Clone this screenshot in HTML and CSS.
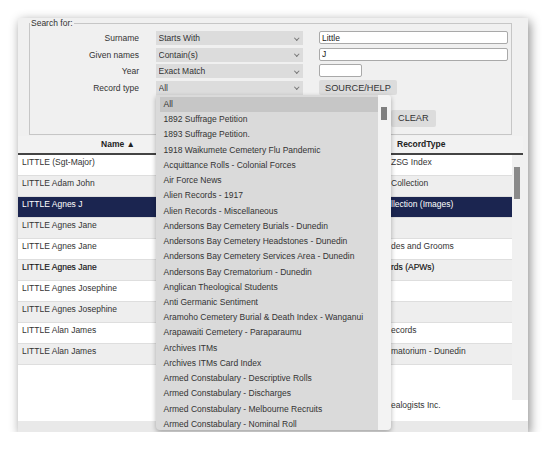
FILE: index.html
```html
<!DOCTYPE html>
<html lang="en">
<head>
    <meta charset="UTF-8">
    <meta name="viewport" content="width=device-width, initial-scale=1.0">
    <title>Search Records</title>
    <link rel="stylesheet" href="styles.css">
</head>
<body>

    <div class="window">
        <fieldset class="search-box">
            <legend>Search for:</legend>
            <div class="search-grid">
                <label for="surname">Surname</label>
                <div class="select-wrap">
                    <select id="surnameMode">
                        <option>Starts With</option>
                        <option>Contain(s)</option>
                        <option>Exact Match</option>
                    </select>
                </div>
                <input type="text" id="surname" class="text-input" value="Little">

                <label for="givenNames">Given names</label>
                <div class="select-wrap">
                    <select id="givenMode">
                        <option>Contain(s)</option>
                        <option>Starts With</option>
                        <option>Exact Match</option>
                    </select>
                </div>
                <input type="text" id="givenNames" class="text-input" value="J">

                <label for="year">Year</label>
                <div class="select-wrap">
                    <select id="yearMode">
                        <option>Exact Match</option>
                        <option>Before</option>
                        <option>After</option>
                    </select>
                </div>
                <input type="text" id="year" class="text-input year-input">

                <label for="recordType">Record type</label>
                <div class="select-wrap">
                    <select id="recordType">
                        <option>All</option>
                    </select>

                    <!-- open list of the record type select -->
                    <div class="dropdown">
                        <ul class="dropdown-list">
                            <li class="active">All</li>
                            <li>1892 Suffrage Petition</li>
                            <li>1893 Suffrage Petition.</li>
                            <li>1918 Waikumete Cemetery Flu Pandemic</li>
                            <li>Acquittance Rolls - Colonial Forces</li>
                            <li>Air Force News</li>
                            <li>Alien Records - 1917</li>
                            <li>Alien Records - Miscellaneous</li>
                            <li>Andersons Bay Cemetery Burials - Dunedin</li>
                            <li>Andersons Bay Cemetery Headstones - Dunedin</li>
                            <li>Andersons Bay Cemetery Services Area - Dunedin</li>
                            <li>Andersons Bay Crematorium - Dunedin</li>
                            <li>Anglican Theological Students</li>
                            <li>Anti Germanic Sentiment</li>
                            <li>Aramoho Cemetery Burial &amp; Death Index - Wanganui</li>
                            <li>Arapawaiti Cemetery - Paraparaumu</li>
                            <li>Archives ITMs</li>
                            <li>Archives ITMs Card Index</li>
                            <li>Armed Constabulary - Descriptive Rolls</li>
                            <li>Armed Constabulary - Discharges</li>
                            <li>Armed Constabulary - Melbourne Recruits</li>
                            <li>Armed Constabulary - Nominal Roll</li>
                        </ul>
                        <div class="dropdown-scroll"><div class="thumb"></div></div>
                    </div>
                </div>
                <button class="btn help-btn">SOURCE/HELP</button>

                <div class="actions">
                    <button class="btn">CLEAR</button>
                </div>
            </div>
        </fieldset>

        <div class="results">
            <div class="results-head">
                <div>Name &#9650;</div>
                <div></div>
                <div>RecordType</div>
                <div></div>
            </div>
            <div class="results-body">
                <div class="rows">
                    <div class="row"><div>LITTLE (Sgt-Major)</div><div></div><div class="cut">ZSG Index</div></div>
                    <div class="row"><div>LITTLE Adam John</div><div></div><div class="cut">Collection</div></div>
                    <div class="row selected"><div>LITTLE Agnes J</div><div></div><div class="cut">llection (Images)</div></div>
                    <div class="row"><div>LITTLE Agnes Jane</div><div></div><div></div></div>
                    <div class="row"><div>LITTLE Agnes Jane</div><div></div><div class="cut">des and Grooms</div></div>
                    <div class="row hover"><div>LITTLE Agnes Jane</div><div></div><div class="cut">rds (APWs)</div></div>
                    <div class="row"><div>LITTLE Agnes Josephine</div><div></div><div></div></div>
                    <div class="row"><div>LITTLE Agnes Josephine</div><div></div><div></div></div>
                    <div class="row"><div>LITTLE Alan James</div><div></div><div class="cut">ecords</div></div>
                    <div class="row"><div>LITTLE Alan James</div><div></div><div class="cut">matorium - Dunedin</div></div>
                </div>
                <div class="vscroll"><div class="thumb"></div></div>
            </div>
        </div>

        <div class="footer">ealogists Inc.</div>
        <div class="hscroll"></div>
    </div>

</body>
</html>
```

FILE: styles.css
```css
body {
    margin: 0;
    background: #fff;
    font-family: 'Liberation Sans', Arial, sans-serif;
    font-size: 8.5px;
    color: #333;
}
.window {
    display: flex;
    flex-direction: column;
    width: 510px;
    height: 414px;
    margin: 18px 0 0 18px;
    background: #f0f0f0;
    box-shadow: 2px 3px 10px rgba(0, 0, 0, 0.45);
    overflow: hidden;
}

/* Search form */
.search-box {
    margin: 0 16px 0 11px;
    padding: 3px 2px 7px 0;
    border: 1px solid #c6c6c6;
    min-width: 0;
}
.search-box legend {
    margin-left: 0;
    padding: 0 1px;
    line-height: 10px;
}
.search-grid {
    display: grid;
    grid-template-columns: 109px 147px 189px;
    grid-template-rows: repeat(4, 14px) auto;
    column-gap: 16.5px;
    row-gap: 2.67px;
    align-items: center;
}
.search-grid label {
    text-align: right;
}
.select-wrap {
    position: relative;
    height: 14px;
}
.select-wrap::after {
    content: '';
    position: absolute;
    right: 4px;
    top: 4.5px;
    width: 2.5px;
    height: 2.5px;
    border-right: 1px solid #777;
    border-bottom: 1px solid #777;
    transform: rotate(45deg);
    pointer-events: none;
}
.select-wrap select {
    appearance: none;
    -webkit-appearance: none;
    display: block;
    width: 100%;
    height: 14px;
    margin: 0;
    padding: 0 3px;
    border: none;
    border-radius: 0;
    background: #dcdcdc;
    font: inherit;
    color: #333;
    outline: none;
}
.text-input {
    box-sizing: border-box;
    align-self: start;
    height: 13px;
    margin: 0;
    padding: 0 2px;
    border: 1px solid #a9a9a9;
    border-radius: 2px;
    background: #fff;
    font: inherit;
    color: #222;
}
.year-input {
    width: 43px;
}
.btn {
    height: 15px;
    padding: 0 6px;
    border: none;
    border-radius: 2px;
    background: #dcdcdc;
    font-family: inherit;
    font-size: 9.2px;
    color: #333;
    cursor: pointer;
}
.help-btn {
    justify-self: start;
}
.actions {
    grid-column: 3;
    display: flex;
    margin: 12.33px 0 0 72px;
}
.actions .btn {
    height: 17px;
    padding: 0 7px;
}

/* Open record type list */
.dropdown {
    position: absolute;
    top: 100%;
    left: 0;
    z-index: 10;
    display: flex;
    width: 235px;
    height: 335px;
    background: #dadada;
    border-radius: 0 3px 4px 4px;
    box-shadow: 0 2px 5px rgba(0, 0, 0, 0.3);
    overflow: hidden;
}
.dropdown-list {
    flex: 1;
    margin: 0;
    padding: 2px 0 0 4px;
    list-style: none;
    overflow: hidden;
}
.dropdown-list li {
    height: 15.24px;
    line-height: 15.24px;
    padding-left: 4px;
    white-space: nowrap;
    color: #333;
}
.dropdown-list li.active {
    background: #c6c6c6;
}
.dropdown-scroll {
    width: 13px;
    background: #f3f3f3;
}
.dropdown-scroll .thumb {
    width: 6px;
    height: 13px;
    margin: 12px 0 0 3px;
    background: #7f7f7f;
}

/* Results */
.results {
    display: flex;
    flex-direction: column;
    flex: 1;
    margin: 1px 5px 0 0;
    min-height: 0;
}
.results-head,
.row {
    display: grid;
    grid-template-columns: 200px 172px 122px;
}
.results-head {
    grid-template-columns: 200px 176px 118px 11px;
    height: 17px;
    line-height: 17px;
    background: #f2f2f2;
    border-bottom: 2px solid #444;
    font-weight: bold;
    color: #222;
    text-align: center;
}
.results-head > div:nth-child(3) {
    text-align: left;
    padding-left: 3px;
}
.results-body {
    display: flex;
    flex: 1;
    min-height: 0;
}
.rows {
    flex: 1;
    background: #fff;
}
.row {
    box-sizing: border-box;
    height: 21px;
    border-bottom: 1px solid #dedede;
    line-height: 10px;
    white-space: nowrap;
}
.row > div {
    padding: 2px 4px 0;
    overflow: hidden;
}
.row > div.cut {
    padding-left: 1px;
}
.row:nth-child(even) {
    background: #eeeeee;
}
.row.selected {
    background: #1b2550;
    color: #fff;
}
.row.hover {
    color: #111;
    -webkit-text-stroke: 0.15px #111;
}
.vscroll {
    width: 11px;
    background: #f0f0f0;
}
.vscroll .thumb {
    width: 6px;
    height: 32px;
    margin: 12px 0 0 2px;
    background: #8a8a8a;
}
.footer {
    height: 21px;
    padding-left: 373px;
    line-height: 10px;
    background: #fff;
    white-space: nowrap;
}
.hscroll {
    height: 11px;
    background: #e9e9e9;
}
```
